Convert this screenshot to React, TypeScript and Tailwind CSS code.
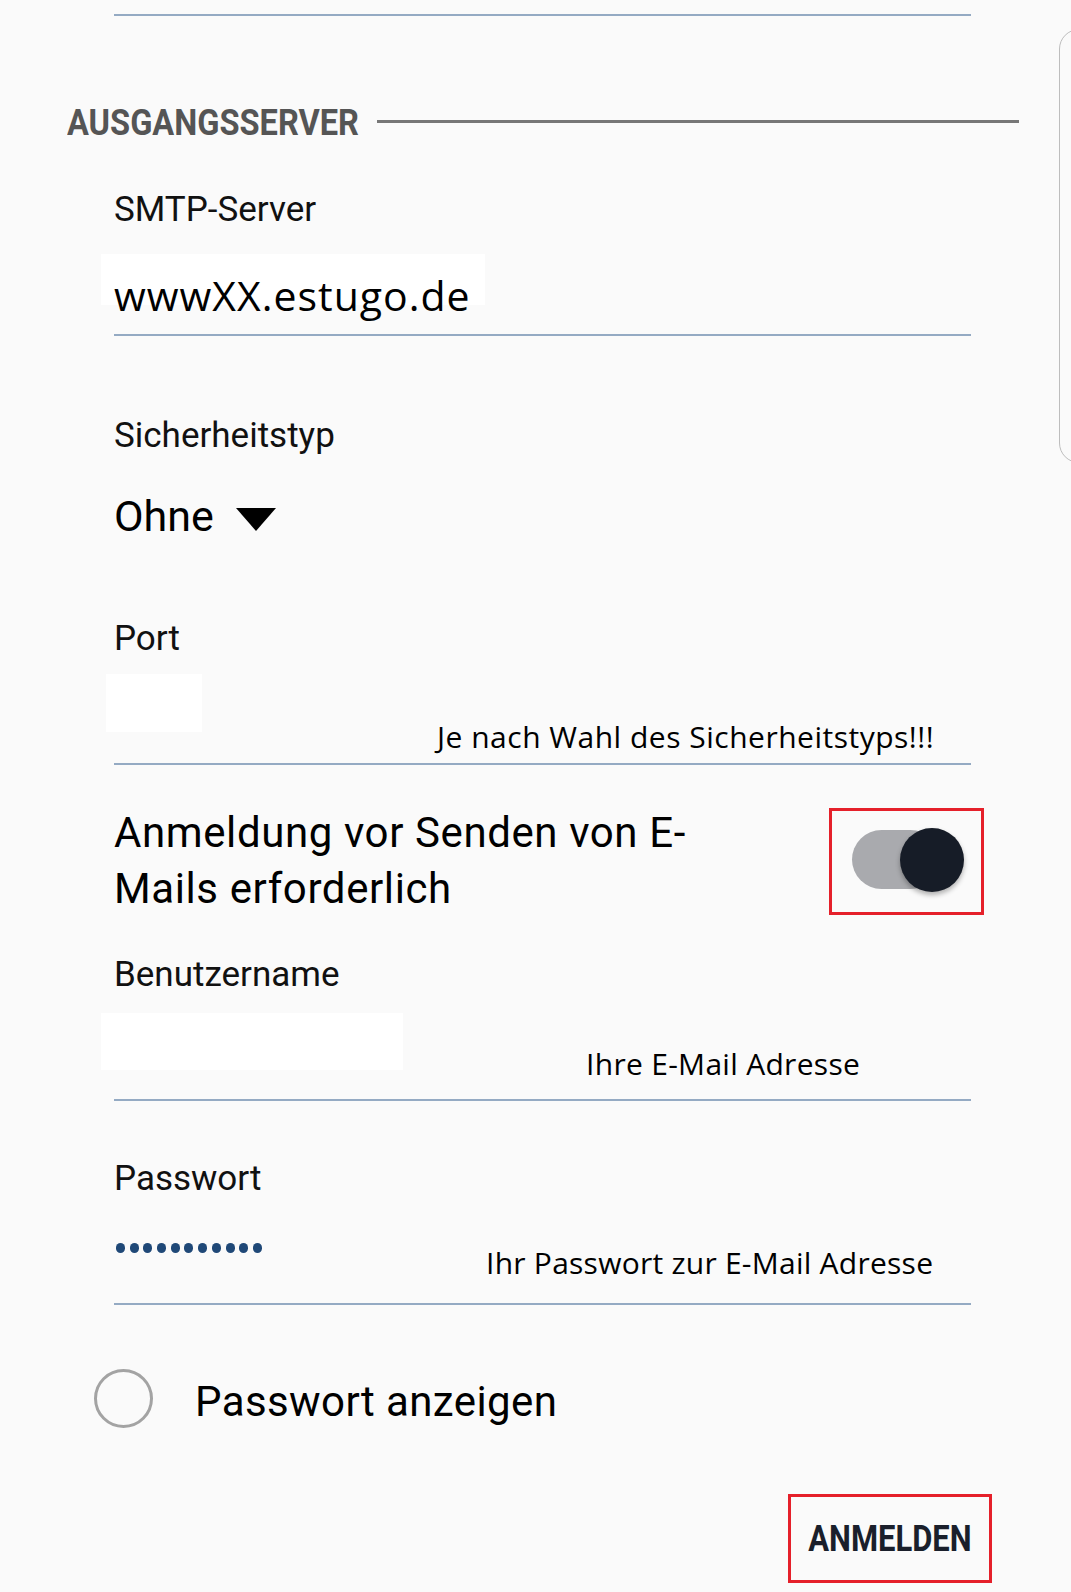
import React from "react";

const roboto = { fontFamily: "Roboto, 'Liberation Sans', sans-serif" };
const openSans = { fontFamily: "'Open Sans', 'Noto Sans', sans-serif" };

function Label({ text, mt }: { text: string; mt: string }) {
  return (
    <div className={`${mt} text-[35px] leading-none text-[#111] whitespace-nowrap`}>{text}</div>
  );
}

export default function App() {
  return (
    <div
      className="relative w-[1071px] h-[1592px] overflow-hidden bg-[#fafafa]"
      style={roboto}
    >
      {/* scrollbar overlay */}
      <div className="absolute left-[1059px] top-[29px] w-[40px] h-[434px] border-[1.5px] border-[#bdbdbd] rounded-[20px]" />

      <div className="flex flex-col pl-[67px]">
        {/* top line */}
        <div className="ml-[47px] w-[857px] mt-[14px] h-[2px] bg-[#94aac3]" />

        {/* heading */}
        <div className="mt-[89px] flex items-start w-[952px]">
          <div className="w-[291px] shrink-0 overflow-visible">
            <div className="origin-left scale-x-[0.905] text-[36px] leading-none font-bold text-[#555555] whitespace-nowrap">
              AUSGANGSSERVER
            </div>
          </div>
          <div className="ml-[19px] mt-[15px] flex-1 h-[3px] bg-[#777777]" />
        </div>

        <div className="ml-[47px] w-[857px] flex flex-col">
          <Label text="SMTP-Server" mt="mt-[51px]" />

          {/* SMTP field */}
          <div className="relative mt-[27px]">
            <div className="absolute -left-[13px] top-0 w-[384px] h-[51px] bg-white" />
            <div
              className="relative pt-[21px] text-[41px] leading-none tracking-[1px] text-black whitespace-nowrap"
              style={openSans}
            >
              wwwXX.estugo.de
            </div>
          </div>
          <div className="mt-[18px] h-[2px] bg-[#94aac3]" />

          <Label text="Sicherheitstyp" mt="mt-[82px]" />

          {/* dropdown */}
          <div className="mt-[42px] flex items-start">
            <div className="text-[43px] leading-none text-black">Ohne</div>
            <svg className="ml-[22px] mt-[13px]" width="40" height="23" viewBox="0 0 40 23">
              <polygon points="0,0 40,0 20,23" fill="#000" />
            </svg>
          </div>

          <Label text="Port" mt="mt-[83px]" />

          {/* Port field */}
          <div className="relative mt-[18px]">
            <div className="absolute -left-[8px] top-0 w-[96px] h-[58px] bg-white" />
            <div
              className="relative pt-[48px] ml-[323px] text-[30px] leading-none tracking-[0.5px] text-black whitespace-nowrap"
              style={openSans}
            >
              Je nach Wahl des Sicherheitstyps!!!
            </div>
          </div>
          <div className="mt-[11px] h-[2px] bg-[#94aac3]" />

          {/* toggle row */}
          <div className="mt-[40px] flex items-start justify-between">
            <div className="text-[42px] leading-[56px] tracking-[0.6px] text-black whitespace-nowrap">
              Anmeldung vor Senden von E-
              <br />
              Mails erforderlich
            </div>
            <div className="-mr-[13px] mt-[3px] w-[155px] h-[107px] border-[3px] border-[#e5202a] shrink-0">
              <div className="relative ml-[20px] mt-[19px] w-[88px] h-[59px] rounded-full bg-[#a9aaae]">
                <div className="absolute left-[48px] -top-[2px] w-[64px] h-[64px] rounded-full bg-[#161c27] shadow-[0_3px_5px_rgba(0,0,0,0.3)]" />
              </div>
            </div>
          </div>

          <Label text="Benutzername" mt="mt-[40px]" />

          {/* user field */}
          <div className="relative mt-[21px]">
            <div className="absolute -left-[13px] top-0 w-[302px] h-[57px] bg-white" />
            <div
              className="relative pt-[36px] ml-[472px] text-[30px] leading-none tracking-[0.3px] text-black whitespace-nowrap"
              style={openSans}
            >
              Ihre E-Mail Adresse
            </div>
          </div>
          <div className="mt-[20px] h-[2px] bg-[#94aac3]" />

          <Label text="Passwort" mt="mt-[60px]" />

          {/* password field */}
          <div className="mt-[47px] flex items-start">
            <div className="flex gap-[4.7px] w-[146px] shrink-0 ml-[2px]">
              {Array.from({ length: 11 }).map((_, i) => (
                <div key={i} className="w-[9px] h-[10px] rounded-full bg-[#1f4877]" />
              ))}
            </div>
            <div
              className="ml-[224px] mt-[5px] text-[30px] leading-none tracking-[0.25px] text-black whitespace-nowrap"
              style={openSans}
            >
              Ihr Passwort zur E-Mail Adresse
            </div>
          </div>
          <div className="mt-[25px] h-[2px] bg-[#94aac3]" />

          {/* show password */}
          <div className="mt-[64px] flex items-start">
            <div className="-ml-[20px] w-[59px] h-[59px] rounded-full border-[3px] border-[#a3a3a3] shrink-0" />
            <div className="ml-[42px] mt-[12px] text-[42px] leading-none tracking-[0.4px] text-black whitespace-nowrap">
              Passwort anzeigen
            </div>
          </div>

          {/* button */}
          <div className="mt-[66px] flex justify-end">
            <div className="-mr-[21px] w-[204px] h-[89px] border-[3px] border-[#e5202a] flex items-center justify-center">
              <div className="origin-center scale-x-[0.86] text-[36px] leading-none font-bold text-[#1a1f2b] whitespace-nowrap">
                ANMELDEN
              </div>
            </div>
          </div>
        </div>
      </div>
    </div>
  );
}
